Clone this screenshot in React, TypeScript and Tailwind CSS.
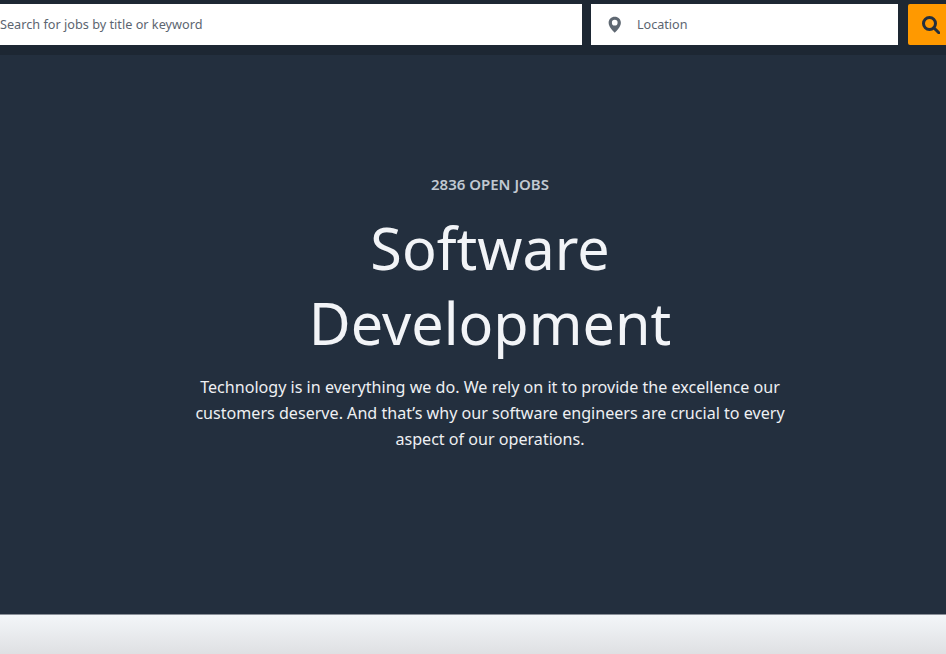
import React from 'react';

const App: React.FC = () => {
  return (
    <div className="w-[946px] h-[654px] overflow-hidden flex flex-col font-['Noto_Sans',sans-serif]">
      <div className="h-[55px] bg-[#1d2733] pt-1 flex shrink-0">
        <div className="w-[582px] h-[41px] pt-[1px] bg-white flex items-center text-[12.7px] text-[#5c6570]">
          Search for jobs by title or keyword
        </div>
        <div className="w-[307px] h-[41px] ml-[9px] bg-white flex items-center text-[12.6px] text-[#5c6570]">
          <svg viewBox="0 0 24 24" className="w-[17.5px] h-[17.5px] ml-[15px] mr-[13.5px] text-[#5f6872]" fill="currentColor">
            <path fillRule="evenodd" d="M12 1C7.200 1 3.600 4.600 3.600 9.200c0 5 5 10.500 8.400 13.800 3.400-3.300 8.400-8.800 8.400-13.800C20.400 4.600 16.800 1 12 1zm0 12a3.900 3.900 0 1 1 0-7.800 3.900 3.900 0 0 1 0 7.800z" />
          </svg>
          <span className="pt-[2px]">Location</span>
        </div>
        <div className="w-[38px] h-[41px] ml-[10px] bg-[#ff9900] flex items-center pl-[14px] text-[#232f3e] rounded-l-[2px]">
          <svg viewBox="0 0 18 18" className="w-[18px] h-[18px]" fill="none" stroke="currentColor" strokeWidth="3">
            <circle cx="7.500" cy="7.500" r="6" />
            <path d="M11.800 11.800 L16.800 16.800" strokeLinecap="round" />
          </svg>
        </div>
      </div>
      <div className="h-[559px] bg-[#232f3e] flex flex-col items-center pt-[119px] shrink-0">
        <div className="w-[600px] ml-[34px] flex flex-col items-center text-center">
          <div className="text-[15px] leading-5 font-semibold text-[#c1c8d1]">2836 OPEN JOBS</div>
          <h1 className="mt-[17px] text-[57.500px] leading-[75px] font-normal text-[#f2f4f7]">
            Software
            <br />
            Development
          </h1>
          <p className="mt-[13px] text-[16.100px] leading-[26px] text-[#eef0f3]">
            Technology is in everything we do. We rely on it to provide the excellence our customers deserve. And that’s why our software engineers are crucial to every aspect of our operations.
          </p>
        </div>
      </div>
      <div className="flex-1 bg-gradient-to-b from-[#f3f6f9] to-[#dfe0e3] border-t border-[#8a9099]" />
    </div>
  );
};

export default App;
